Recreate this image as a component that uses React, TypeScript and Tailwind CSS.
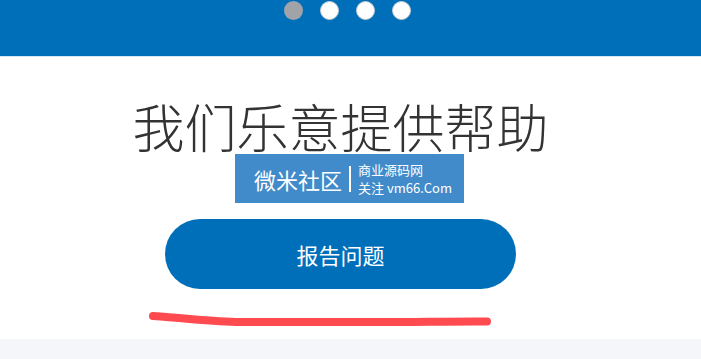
export default function App() {
  const cjk = { fontFamily: '"Noto Sans CJK SC", "Noto Sans", sans-serif' };

  return (
    <div className="relative w-[701px] h-[359px] overflow-hidden bg-white flex flex-col" style={cjk}>
      {/* carousel header */}
      <div className="h-[57px] shrink-0 bg-[#006fba] border-b border-[#d6e6f3] flex justify-center gap-[17px] pt-[1px] pr-[7px]">
        <span className="w-[19px] h-[19px] rounded-full bg-[#a0a4a8]" />
        <span className="w-[19px] h-[19px] rounded-full bg-white border border-[#c9ccd0]" />
        <span className="w-[19px] h-[19px] rounded-full bg-white border border-[#c9ccd0]" />
        <span className="w-[19px] h-[19px] rounded-full bg-white border border-[#c9ccd0]" />
      </div>

      <div className="h-[282px] shrink-0 flex flex-col items-center pr-[20px]">
        <h1 className="mt-[43px] text-[52px] leading-[52px] font-light text-[#333333]">
          我们乐意提供帮助
        </h1>
        <button className="mt-[67px] w-[351px] h-[71px] rounded-full bg-[#006fba] text-white text-[22px] leading-none">
          报告问题
        </button>
        <svg className="ml-[20px] shrink-0" width="701" height="50" viewBox="0 0 701 50">
          <path
            d="M153 27 C 190 29.5, 215 32.8, 240 33 L 410 33 C 440 32.7, 465 32.3, 487 32.5"
            fill="none"
            stroke="#ff4a4f"
            strokeWidth="8"
            strokeLinecap="round"
          />
        </svg>
      </div>

      <div className="flex-1 bg-[#f5f6fa]" />

      {/* watermark overlay */}
      <div className="absolute left-[235px] top-[154px] w-[229px] h-[49px] bg-[#428bca] flex items-center pl-[19px] text-white">
        <span className="text-[22px] leading-none">微米社区</span>
        <span className="mx-[7px] w-[2px] h-[26px] bg-white" />
        <div className="flex flex-col text-[13px] leading-[18px] pt-[1px]">
          <span className="block h-[18px]">商业源码网</span>
          <span className="block h-[18px]">关注 vm66.Com</span>
        </div>
      </div>
    </div>
  );
}
